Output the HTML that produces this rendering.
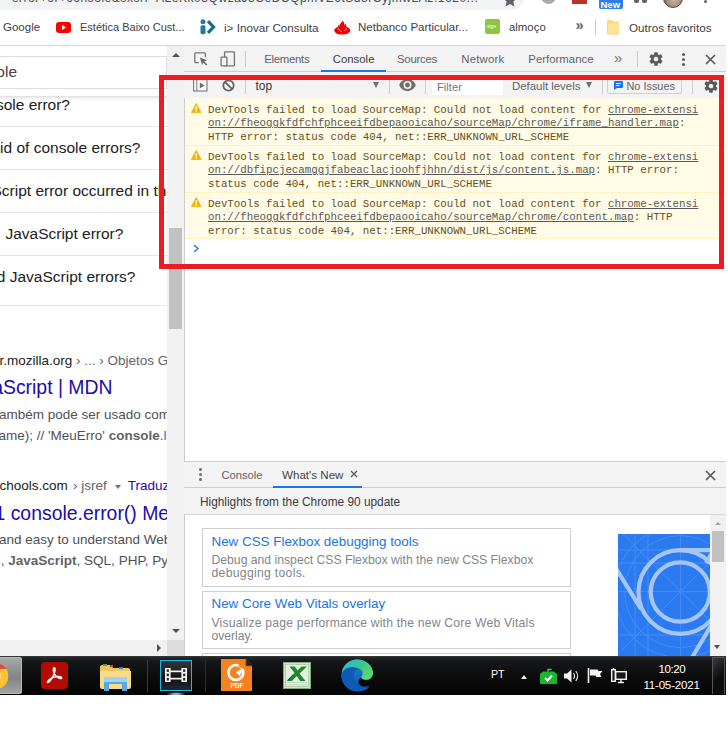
<!DOCTYPE html>
<html>
<head>
<meta charset="utf-8">
<title>DevTools console</title>
<style>
*{box-sizing:border-box;margin:0;padding:0}
html,body{width:728px;height:750px;overflow:hidden;background:#fff}
body{position:relative;font-family:"Liberation Sans",sans-serif;color:#333;-webkit-font-smoothing:antialiased}
#wrap{position:absolute;left:0;top:0;width:726px;height:695px;overflow:hidden;background:#fff}
.abs{position:absolute}
.t{position:absolute;white-space:nowrap;line-height:1}
/* top chrome */
#omni{left:-20px;top:-20px;width:545px;height:30px;background:#f1f3f4;border-radius:14px}
#bm{left:0;top:10px;width:728px;height:35px;background:transparent}
#bmline{left:0;top:45px;width:728px;height:1px;background:#d4d6d9}
.bmt{font-size:12px;color:#3c4043;top:21.600px}
/* page */
#page{left:0;top:46px;width:167px;height:594px;background:#fff;overflow:hidden}
.q{font-size:16.5px;color:#202124}
.sep{position:absolute;left:0;width:167px;height:1px;background:#e4e6e9}
/* devtools */
#dt{left:184px;top:46px;width:544px;height:610px;background:#fff;border-left:1px solid #cdcdcd}
#dtbar{left:184px;top:46px;width:544px;height:26px;background:#f3f3f3;border-bottom:1px solid #cdcdcd}
.tab{font-size:12px;color:#5f6368;top:54px}
#ctbar{left:184px;top:72px;width:544px;height:27px;background:#f3f3f3;border-bottom:1px solid #d6d6d6}
.msg{position:absolute;left:185px;width:541px;height:47px;background:#fffbe6;border-bottom:1px solid #fff1c0}
.ml{position:absolute;left:23px;white-space:pre;font-family:"Liberation Mono",monospace;font-size:10.75px;line-height:1;color:#66501c}
.ml u{color:#595959}
/* drawer */
#drtab{left:184px;top:461px;width:544px;height:27px;background:#f3f3f3;border-top:1px solid #cdcdcd;border-bottom:1px solid #cdcdcd}
#drhead{left:184px;top:488px;width:544px;height:27px;background:#f3f3f3;border-bottom:1px solid #d6d6d6}
.card{position:absolute;left:202px;width:369px;background:#fff;border:1px solid #d0d0d0}
.ct{font-size:13.5px;color:#1a73e8}
.cd{font-size:12.5px;color:#80868b}
/* taskbar */
#tb{left:0;top:656px;width:728px;height:39px;background:linear-gradient(#3a3b3d 0,#222325 5%,#161719 14%,#0c0c0d 50%,#050505 100%)}
</style>
</head>
<body>
<div id="wrap">
<!-- top -->
<div class="abs" id="omni"></div>
<div class="t" style="left:3px;top:-8px;font-size:12px;color:#4a4d51;letter-spacing:.55px">&#8226; error+or+console&amp;sxsrf=ALeKk03QwzaJ5CeDCQpmVZ6tSd8rCyjmwLAz:1620...</div>
<svg class="abs" style="left:502px;top:-8px" width="16" height="16" viewBox="0 0 16 16"><path d="M8 1l2.1 4.6 5 .6-3.7 3.4 1 5L8 12.1 3.6 14.6l1-5L.9 6.200l5-.6z" fill="#5f6368"/></svg>
<div class="abs" style="left:540.500px;top:-11.500px;width:15px;height:15px;border-radius:8px;background:#a6abb0"></div>
<div class="abs" style="left:572px;top:-6px;width:15px;height:9.500px;background:#b83227"></div>
<div class="abs" style="left:598.500px;top:-2px;width:24px;height:11px;background:#2f7df0;border-radius:2px"></div>
<div class="t" style="left:600.500px;top:-.3px;font-size:9.500px;font-weight:700;color:#fff">New</div>
<div class="abs" style="left:634px;top:-3px;width:5px;height:6px;background:#5f6368;border-radius:0 0 2px 2px"></div>
<div class="abs" style="left:642px;top:-3px;width:5px;height:6px;background:#5f6368;border-radius:0 0 2px 2px"></div>
<div class="abs" style="left:663px;top:-12.500px;width:20px;height:20px;border-radius:10px;background:radial-gradient(circle at 55% 60%,#c9b3a6 0,#a98f82 45%,#6d544a 75%);border:1.500px solid #5d4037"></div>
<div class="abs" style="left:703.800px;top:-.5px;width:3px;height:3px;border-radius:2px;background:#5f6368"></div>
<div class="abs" id="bm"></div>
<div class="abs" id="bmline"></div>
<div class="t bmt" style="left:3px;font-size:11.5px">Google</div>
<svg class="abs" style="left:56px;top:22px" width="15" height="11" viewBox="0 0 15 11"><rect width="15" height="11" rx="3" fill="#f00"/><path d="M6 3l4 2.500L6 8z" fill="#fff"/></svg>
<div class="t bmt" style="left:80px;font-size:11px">Estética Baixo Cust...</div>
<svg class="abs" style="left:199.500px;top:19px" width="17" height="16" viewBox="0 0 17 16"><circle cx="3" cy="2.800" r="2.500" fill="#1b7f9b"/><rect x=".5" y="6.200" width="5" height="9" rx="1.600" fill="#1b7f9b"/><path d="M8 2.200L13.500 8 8 13.800" fill="none" stroke="#126e8a" stroke-width="3.200"/></svg>
<div class="t bmt" style="left:224px;font-size:11.7px">i&gt; Inovar Consulta</div>
<svg class="abs" style="left:334px;top:19.500px" width="16.500" height="15" viewBox="0 0 16 15"><path d="M8.600 .3c.2 1.300 1.600 2.400 1.600 4.200 0 .5-.1.900-.2 1.200.6-.5 1-1.200.9-2.100 1 1 1.600 2.200 1.500 3.500 2.100.6 3.600 1.800 3.600 3.300 0 2.300-3.600 4.100-8 4.100s-8-1.800-8-4.100c0-1.500 1.500-2.700 3.700-3.400 0-1 .6-1.900 1.200-2.700-.1 1.100.2 1.900.8 2.500-.2-.5-.3-1-.3-1.500 0-2 2.900-3 3.200-5z" fill="#ec0000"/><path d="M4 8.300c.5 1.500 1.800 2.700 3.300 3.400M12 8.300c-.3 1-.9 1.900-1.700 2.600" fill="none" stroke="#fff" stroke-width=".7"/></svg>
<div class="t bmt" style="left:358px;font-size:11.5px">Netbanco Particular...</div>
<div class="abs" style="left:485px;top:19px;width:15px;height:15px;border-radius:2px;background:#8dc63f"></div>
<div class="t" style="left:487px;top:24px;font-size:5px;color:#fff">sige</div>
<div class="t bmt" style="left:509px;font-size:11.4px">almoço</div>
<div class="t" style="left:575.500px;top:18.300px;font-size:14.500px;color:#5f6368;font-weight:700">»</div>
<div class="abs" style="left:595px;top:19px;width:1px;height:16px;background:#c8cace"></div>
<svg class="abs" style="left:606.500px;top:20px" width="12.500" height="15" viewBox="0 0 12.500 15"><path d="M0 1.500C0 .7.600 0 1.400 0H5l1.500 1.500h4.600c.8 0 1.400.7 1.400 1.500v10c0 .8-.6 1.500-1.400 1.500H1.400C.6 14.500 0 13.800 0 13z" fill="#f9d976"/><path d="M.8 3.500h10.900v9.800H.8z" fill="#fce49a"/></svg>
<div class="t bmt" style="left:629px;font-size:11.7px">Outros favoritos</div>

<!-- page column -->
<div class="abs" id="page">
<div class="abs" style="left:-10px;top:10px;width:177px;height:33px;border:1px solid #dcdee3;background:#fff"></div>
<div class="abs" style="left:0;top:49.500px;width:167px;height:5px;background:linear-gradient(rgba(0,0,0,.13),rgba(0,0,0,.04) 50%,rgba(0,0,0,0))"></div>
<div class="t" style="left:-3.7px;top:18px;font-size:15.5px;color:#444;">ole</div>
<div class="t" style="right:97px;top:51.38px;font-size:15.5px;color:#202124;">sole error?</div>
<div class="t" style="right:26.5px;top:93.58px;font-size:15.5px;color:#202124;">id of console errors?</div>
<div class="t" style="left:-8.5px;top:137.08px;font-size:15.5px;color:#202124;">Script error occurred in the console</div>
<div class="t" style="left:5.4px;top:180.08px;font-size:15.5px;color:#202124;">JavaScript error?</div>
<div class="t" style="right:31.5px;top:222.88px;font-size:15.5px;color:#202124;">d JavaScript errors?</div>
<div class="sep" style="top:80px"></div>
<div class="sep" style="top:123px"></div>
<div class="sep" style="top:166px"></div>
<div class="sep" style="top:209px"></div>
<div class="sep" style="top:259px"></div>
<div class="t" style="left:-0.5px;top:308.07px;font-size:13.5px;color:#202124;">r.mozilla.org<span style="color:#5f6368"> › ... › Objetos Globais</span></div>
<div class="t" style="right:54.5px;top:331.58px;font-size:19.4px;color:#1a0dab;">aScript | MDN</div>
<div class="t" style="left:-1px;top:362.17px;font-size:13.5px;color:#4d5156;">ambém pode ser usado como</div>
<div class="t" style="left:-1.5px;top:382.57px;font-size:13.5px;color:#4d5156;">ame); // 'MeuErro' <b style="color:#5f6368">console</b>.<span style="color:#1a73e8">l</span></div>
<div class="t" style="left:-0.5px;top:432.97px;font-size:13.5px;color:#202124;">chools.com<span style="color:#5f6368;margin-left:1.500px"> › jsref</span></div>
<div class="abs" style="left:115px;top:438.500px;width:0;height:0;border-left:3.700px solid transparent;border-right:3.700px solid transparent;border-top:4.500px solid #70757a"></div>
<div class="t" style="left:127.8px;top:432.97px;font-size:13.5px;color:#1a0dab;">Traduzir</div>
<div class="t" style="left:-5.5px;top:457.68px;font-size:19.4px;color:#1a0dab;">1 console.error() Method</div>
<div class="t" style="left:-1px;top:486.87px;font-size:13.5px;color:#4d5156;">and easy to understand Web</div>
<div class="t" style="left:0.8px;top:508.17px;font-size:13.5px;color:#4d5156;">, <b style="color:#5f6368">JavaScript</b>, SQL, PHP, Python</div>
</div>
<div class="abs" style="left:167px;top:46px;width:17px;height:610px;background:#f1f1f1"></div>
<div class="abs" style="left:171.500px;top:53px;width:0;height:0;border-left:4px solid transparent;border-right:4px solid transparent;border-bottom:4.500px solid #505050"></div>
<div class="abs" style="left:169px;top:228px;width:13px;height:101px;background:#c1c1c1"></div>
<div class="abs" style="left:171.500px;top:629px;width:0;height:0;border-left:4px solid transparent;border-right:4px solid transparent;border-top:4.500px solid #505050"></div>
<div class="abs" style="left:0;top:640px;width:167px;height:16px;background:#f1f1f1"></div>
<div class="abs" style="left:167px;top:640px;width:17px;height:16px;background:#dcdcdc"></div>
<div class="abs" style="left:157px;top:644px;width:0;height:0;border-top:4px solid transparent;border-bottom:4px solid transparent;border-left:4.500px solid #505050"></div>

<!-- devtools -->
<div class="abs" id="dt"></div>
<div class="abs" id="dtbar"></div>
<svg class="abs" style="left:194px;top:52px" width="15" height="14" viewBox="0 0 15 14"><path d="M11.400 5.200V1.800c0-.5-.4-.9-.9-.9H1.700c-.5 0-.9.400-.9.900v8c0 .5.400.9.900.9H4.800" fill="none" stroke="#757575" stroke-width="1.300"/><path d="M6 5.500l7 2.800-2.700 1.200 3 3-1.100 1.100-3-3-1.200 2.700z" fill="#6a6a6a"/></svg>
<svg class="abs" style="left:219.500px;top:51px" width="16" height="16" viewBox="0 0 16 16"><rect x="4.600" y=".8" width="9.800" height="14" rx=".5" fill="none" stroke="#757575" stroke-width="1.300"/><rect x="1.100" y="6.200" width="5.800" height="8.600" rx=".5" fill="#f3f3f3" stroke="#757575" stroke-width="1.300"/></svg>
<div class="abs" style="left:245px;top:51px;width:1px;height:16px;background:#ccc"></div>
<div class="t tab" style="left:264.300px;font-size:11.400px;letter-spacing:-.3px">Elements</div>
<div class="t tab" style="left:332.700px;font-size:11.400px;color:#3c3c3c">Console</div>
<div class="abs" style="left:321px;top:70px;width:65px;height:2px;background:#1a73e8"></div>
<div class="t tab" style="left:397px;font-size:11.400px;letter-spacing:-.27px">Sources</div>
<div class="t tab" style="left:461.300px;font-size:11.400px;letter-spacing:.17px">Network</div>
<div class="t tab" style="left:528.300px;font-size:11.400px">Performance</div>
<div class="t" style="left:614px;top:50px;font-size:15px;color:#6e6e6e">»</div>
<div class="abs" style="left:637px;top:51px;width:1px;height:16px;background:#ccc"></div>
<svg class="abs gear" style="left:647.800px;top:50.800px" width="16" height="16" viewBox="0 0 24 24"><path fill="#5a5a5a" d="M19.430 12.980c.040-.320.070-.640.070-.980s-.030-.660-.070-.980l2.110-1.650c.190-.150.240-.420.120-.640l-2-3.460c-.120-.220-.390-.300-.610-.220l-2.490 1c-.520-.400-1.080-.730-1.690-.980l-.380-2.650C14.460 2.180 14.250 2 14 2h-4c-.250 0-.460.180-.490.420l-.380 2.650c-.610.250-1.170.590-1.690.980l-2.490-1c-.230-.090-.490 0-.610.220l-2 3.460c-.130.220-.070.490.120.640l2.110 1.650c-.040.320-.070.650-.070.980s.030.660.070.980l-2.110 1.650c-.190.150-.240.420-.120.640l2 3.460c.120.220.390.300.610.220l2.490-1c.520.400 1.080.730 1.690.980l.380 2.650c.030.240.240.420.490.420h4c.250 0 .460-.180.490-.420l.380-2.650c.610-.250 1.170-.590 1.690-.980l2.490 1c.230.090.490 0 .610-.220l2-3.460c.120-.220.070-.490-.120-.640l-2.110-1.650zM12 15.500c-1.930 0-3.500-1.570-3.500-3.500s1.570-3.500 3.500-3.500 3.500 1.570 3.500 3.500-1.570 3.500-3.500 3.500z"/></svg>
<div class="abs" style="left:682.300px;top:52.7px;width:3px;height:3px;border-radius:2px;background:#5a5a5a"></div>
<div class="abs" style="left:682.300px;top:57.7px;width:3px;height:3px;border-radius:2px;background:#5a5a5a"></div>
<div class="abs" style="left:682.300px;top:62.7px;width:3px;height:3px;border-radius:2px;background:#5a5a5a"></div>
<svg class="abs" style="left:705px;top:53.500px" width="11" height="11" viewBox="0 0 11 11"><path d="M1 1l9 9M10 1l-9 9" stroke="#5a5a5a" stroke-width="1.700" fill="none"/></svg>

<div class="abs" id="ctbar"></div>
<svg class="abs" style="left:192.500px;top:79px" width="15" height="13" viewBox="0 0 15 13"><rect x=".6" y=".6" width="13.400" height="11.400" fill="#fafafa" stroke="#777" stroke-width="1.100"/><path d="M3.800 1v11" stroke="#777" stroke-width="1"/><path d="M6.800 3.400l4.800 3-4.800 3z" fill="#6e6e6e"/></svg>
<svg class="abs" style="left:222px;top:79px" width="13" height="13" viewBox="0 0 13 13"><circle cx="6.500" cy="6.500" r="5.200" fill="none" stroke="#5f5f5f" stroke-width="1.700"/><path d="M2.800 2.800l7.400 7.400" stroke="#5f5f5f" stroke-width="1.700"/></svg>
<div class="abs" style="left:245px;top:77px;width:1px;height:17px;background:#ccc"></div>
<div class="t" style="left:255.500px;top:81px;font-size:11.900px;color:#333">top</div>
<div class="abs" style="left:373px;top:82px;width:0;height:0;border-left:3.500px solid transparent;border-right:3.500px solid transparent;border-top:6px solid #6e6e6e"></div>
<div class="abs" style="left:389px;top:77px;width:1px;height:17px;background:#ccc"></div>
<svg class="abs" style="left:399px;top:79px" width="17" height="12" viewBox="0 0 17 12"><path d="M8.500 0C4.800 0 1.600 2.400.2 6c1.400 3.600 4.600 6 8.300 6s6.900-2.400 8.300-6C15.400 2.400 12.200 0 8.500 0zm0 10a4 4 0 110-8 4 4 0 010 8zm0-6.400a2.400 2.400 0 100 4.800 2.400 2.400 0 000-4.800z" fill="#6e6e6e"/></svg>
<div class="abs" style="left:425px;top:77px;width:1px;height:17px;background:#ccc"></div>
<div class="abs" style="left:432px;top:77px;width:71px;height:18px;background:#fff"></div>
<div class="t" style="left:437px;top:81.700px;font-size:11.250px;color:#757575">Filter</div>
<div class="t" style="left:512px;top:81px;font-size:11.400px;color:#5f6368">Default levels</div>
<div class="abs" style="left:586px;top:82px;width:0;height:0;border-left:3.500px solid transparent;border-right:3.500px solid transparent;border-top:6px solid #6e6e6e"></div>
<div class="abs" style="left:602px;top:77px;width:1px;height:17px;background:#ccc"></div>
<div class="abs" style="left:607px;top:79px;width:75px;height:15px;border:1px solid #d0d0d0;border-radius:2px;background:#f3f3f3"></div>
<svg class="abs" style="left:614px;top:81px" width="9" height="9" viewBox="0 0 9 9"><path d="M1 0h7a1 1 0 011 1v5a1 1 0 01-1 1H3L0 9V1a1 1 0 011-1z" fill="#1a73e8"/><rect x="2" y="2" width="5" height="1" fill="#fff"/><rect x="2" y="4" width="3.500" height="1" fill="#fff"/></svg>
<div class="t" style="left:626.500px;top:81px;font-size:10.900px;color:#5f6368">No Issues</div>
<div class="abs" style="left:692px;top:77px;width:1px;height:17px;background:#ccc"></div>
<svg class="abs gear" style="left:702.500px;top:77.500px" width="16" height="16" viewBox="0 0 24 24"><path fill="#5a5a5a" d="M19.430 12.980c.040-.320.070-.640.070-.980s-.030-.660-.070-.980l2.110-1.650c.190-.150.240-.420.120-.640l-2-3.460c-.120-.220-.390-.300-.610-.220l-2.490 1c-.520-.400-1.080-.730-1.690-.980l-.380-2.650C14.460 2.180 14.250 2 14 2h-4c-.250 0-.460.180-.490.420l-.380 2.650c-.610.250-1.170.590-1.690.980l-2.490-1c-.230-.090-.490 0-.610.220l-2 3.460c-.130.220-.070.490.120.640l2.110 1.650c-.040.320-.070.650-.070.980s.030.660.070.980l-2.110 1.650c-.190.150-.240.420-.120.640l2 3.460c.120.220.390.300.610.220l2.490-1c.520.400 1.080.730 1.690.980l.380 2.650c.030.240.240.420.490.420h4c.250 0 .460-.180.490-.420l.380-2.650c.610-.250 1.170-.590 1.690-.980l2.490 1c.230.090.490 0 .610-.220l2-3.460c.120-.220.070-.490-.120-.640l-2.110-1.650zM12 15.500c-1.930 0-3.500-1.570-3.500-3.500s1.570-3.500 3.500-3.500 3.500 1.570 3.500 3.500-1.570 3.500-3.500 3.500z"/></svg>

<!-- messages -->
<div class="msg" style="top:98px;height:48px"><svg class="abs" style="left:6.400px;top:4.7px" width="10.500" height="10.500" viewBox="0 0 10 10"><path d="M5 .3L9.800 9.300H.2z" fill="#f0b400" stroke="#f0b400" stroke-width=".6" stroke-linejoin="round"/><rect x="4.350" y="3" width="1.300" height="3.400" fill="#fff"/><rect x="4.350" y="7.100" width="1.300" height="1.300" fill="#fff"/></svg><div class="ml" style="top:6.50px">DevTools failed to load SourceMap: Could not load content for <u>chrome-extensi</u></div><div class="ml" style="top:20.35px"><u>on://fheoggkfdfchfphceeifdbepaooicaho/sourceMap/chrome/iframe_handler.map</u>:</div><div class="ml" style="top:34.20px">HTTP error: status code 404, net::ERR_UNKNOWN_URL_SCHEME</div></div>
<div class="msg" style="top:146px;height:47px"><svg class="abs" style="left:6.400px;top:3.7px" width="10.500" height="10.500" viewBox="0 0 10 10"><path d="M5 .3L9.800 9.300H.2z" fill="#f0b400" stroke="#f0b400" stroke-width=".6" stroke-linejoin="round"/><rect x="4.350" y="3" width="1.300" height="3.400" fill="#fff"/><rect x="4.350" y="7.100" width="1.300" height="1.300" fill="#fff"/></svg><div class="ml" style="top:5.50px">DevTools failed to load SourceMap: Could not load content for <u>chrome-extensi</u></div><div class="ml" style="top:19.35px"><u>on://dbfipcjecamggjfabeaclacjoohfjhhn/dist/js/content.js.map</u>: HTTP error:</div><div class="ml" style="top:33.20px">status code 404, net::ERR_UNKNOWN_URL_SCHEME</div></div>
<div class="msg" style="top:193px;height:46px"><svg class="abs" style="left:6.400px;top:3.7px" width="10.500" height="10.500" viewBox="0 0 10 10"><path d="M5 .3L9.800 9.300H.2z" fill="#f0b400" stroke="#f0b400" stroke-width=".6" stroke-linejoin="round"/><rect x="4.350" y="3" width="1.300" height="3.400" fill="#fff"/><rect x="4.350" y="7.100" width="1.300" height="1.300" fill="#fff"/></svg><div class="ml" style="top:5.50px">DevTools failed to load SourceMap: Could not load content for <u>chrome-extensi</u></div><div class="ml" style="top:19.35px"><u>on://fheoggkfdfchfphceeifdbepaooicaho/sourceMap/chrome/content.map</u>: HTTP</div><div class="ml" style="top:33.20px">error: status code 404, net::ERR_UNKNOWN_URL_SCHEME</div></div>
<svg class="abs" style="left:193px;top:244px" width="7" height="9" viewBox="0 0 7 9"><path d="M1 1l4 3.500L1 8" fill="none" stroke="#3b78e7" stroke-width="1.500"/></svg>

<!-- drawer -->
<div class="abs" id="drtab"></div>
<div class="abs" id="drhead"></div>
<div class="abs" style="left:199px;top:467.7px;width:3px;height:3px;border-radius:2px;background:#6e6e6e"></div>
<div class="abs" style="left:199px;top:472.7px;width:3px;height:3px;border-radius:2px;background:#6e6e6e"></div>
<div class="abs" style="left:199px;top:477.7px;width:3px;height:3px;border-radius:2px;background:#6e6e6e"></div>
<div class="t" style="left:221.500px;top:470.43px;font-size:11.200px;color:#5f6368">Console</div>
<div class="t" style="left:282px;top:469.00px;font-size:11.600px;color:#444">What's New</div>
<svg class="abs" style="left:350px;top:470px" width="8" height="8" viewBox="0 0 8 8"><path d="M1 1l6 6M7 1L1 7" stroke="#5a5a5a" stroke-width="1.300" fill="none"/></svg>
<div class="abs" style="left:273px;top:486px;width:89px;height:2px;background:#1a73e8"></div>
<svg class="abs" style="left:705px;top:470px" width="11" height="11" viewBox="0 0 11 11"><path d="M1 1l9 9M10 1l-9 9" stroke="#5a5a5a" stroke-width="1.700" fill="none"/></svg>
<div class="t" style="left:200px;top:497.36px;font-size:11.850px;color:#3a3a3a">Highlights from the Chrome 90 update</div>
<div class="card" style="top:528px;height:59px"></div>
<div class="card" style="top:591px;height:58px"></div>
<div class="card" style="top:653px;height:20px"></div>
<div class="t ct" style="left:211.500px;top:535.00px;font-size:13.400px">New CSS Flexbox debugging tools</div>
<div class="t cd" style="left:211.500px;top:553.97px;font-size:12.200px">Debug and inspect CSS Flexbox with the new CSS Flexbox</div>
<div class="t cd" style="left:211.500px;top:567.17px;font-size:12.200px;letter-spacing:.3px">debugging tools.</div>
<div class="t ct" style="left:211.500px;top:597.10px;font-size:13.400px">New Core Web Vitals overlay</div>
<div class="t cd" style="left:211.500px;top:616.97px;font-size:12.200px;letter-spacing:.185px">Visualize page performance with the new Core Web Vitals</div>
<div class="t cd" style="left:211.500px;top:629.77px;font-size:12.200px;letter-spacing:-.05px">overlay.</div>
<svg class="abs" style="left:618px;top:534px" width="92" height="122" viewBox="618 534 92 122">
<rect x="618" y="534" width="92" height="122" fill="#2b7af0"/>
<g stroke="#6ea6f7" stroke-width="1" fill="none" opacity=".42">
<path d="M635 534v122M648 534v122M680.600 534v122M618 550h92M618 563h92M618 591.600h92M618 635h92"/>
<path d="M620 531l100 100M741 531L621 651"/>
<circle cx="680.600" cy="591.600" r="56"/><circle cx="680.600" cy="591.600" r="66"/>
</g>
<g stroke="#a4c6fb" stroke-width="4.200" fill="none">
<circle cx="680.300" cy="592" r="29.600"/>
<circle cx="680.300" cy="592" r="41.800"/>
<path d="M680 550.200h32M612 562l29 47M713 622.500l-24 40M712 553l-6 10"/>
</g>
</svg>
<div class="abs" style="left:710px;top:515px;width:16px;height:141px;background:#f1f1f1"></div>
<div class="abs" style="left:715px;top:521.500px;width:0;height:0;border-left:3.300px solid transparent;border-right:3.300px solid transparent;border-bottom:3.800px solid #a3a3a3"></div>
<div class="abs" style="left:712px;top:531px;width:12px;height:31px;background:#c1c1c1"></div>
<div class="abs" style="left:714.200px;top:645.300px;width:0;height:0;border-left:3.700px solid transparent;border-right:3.700px solid transparent;border-top:4.200px solid #505050"></div>

<!-- taskbar -->
<div class="abs" id="tb"></div>
<div class="abs" style="left:-3px;top:657px;width:25px;height:37px;border:1px solid #b9b9b9;border-radius:2px;background:linear-gradient(#a9a9a9,#8a8a8a 45%,#858585 60%,#a3a3a3)"></div>
<svg class="abs" style="left:-17.700px;top:663.200px" width="26.400" height="26.400" viewBox="0 0 30 30"><defs><clipPath id="cc"><circle cx="15" cy="15" r="15"/></clipPath></defs><g clip-path="url(#cc)"><rect width="30" height="30" fill="#fbc230"/><rect width="30" height="6.800" fill="#de4b3c"/><rect x="0" y="12" width="21" height="6" fill="#fff3d0"/></g></svg>
<svg class="abs" style="left:41px;top:662px" width="27" height="27" viewBox="0 0 27 27"><rect width="27" height="27" rx="4" fill="#b30b00"/><path d="M6.500 20c1-2.500 5-5 11-5.500 2-.2 3.500.5 3 1.500-.6 1-3 .3-5-1.500-2.500-2.300-3.600-6-3-8 .4-1.200 1.700-.8 1.700.8 0 3-3 9.500-5.500 12-.9.900-2.600 1.700-2.200.7z" fill="none" stroke="#fff" stroke-width="1.500"/></svg>
<svg class="abs" style="left:99px;top:662px" width="33" height="30" viewBox="0 0 33 30">
<path d="M1 5c0-1 .8-2 2-2h9l2 3h15c1.200 0 2 .8 2 2v16H1z" fill="#e9c860"/>
<rect x="4" y="2" width="4" height="2" fill="#3aa845"/><rect x="11" y="3" width="3" height="2" fill="#d8392b"/><rect x="20" y="5" width="4" height="2" fill="#2f7de1"/>
<path d="M1 9h31v16a2 2 0 01-2 2H3a2 2 0 01-2-2z" fill="#f6dc86"/>
<path d="M5 29V17a2 2 0 012-2h19a2 2 0 012 2v12h-5v-7H10v7z" fill="#57a7e0"/>
<path d="M5 20V17a2 2 0 012-2h19a2 2 0 012 2v3z" fill="#9fd2f5"/>
</svg>
<div class="abs" style="left:147px;top:660px;width:1px;height:32px;background:#3a3a3a"></div>
<div class="abs" style="left:205px;top:660px;width:1px;height:32px;background:#2e2e2e"></div>
<div class="abs" style="left:160px;top:660px;width:32px;height:31px;border:1.500px solid #21b6e8;background:linear-gradient(#33383d,#111 60%,#1c2a33)"></div>
<svg class="abs" style="left:165px;top:667.500px" width="22" height="15" viewBox="0 0 22 15"><rect x="0" y="0" width="5.600" height="14" fill="#f4f4f4"/><rect x="16.400" y="0" width="5.600" height="14" fill="#f4f4f4"/><rect x="5" y="2.500" width="12" height="1.700" fill="#f4f4f4"/><rect x="5" y="9.800" width="12" height="1.700" fill="#f4f4f4"/><g fill="#2a2a2a"><rect x="1.700" y="1.300" width="2.200" height="2.600"/><rect x="1.700" y="5.600" width="2.200" height="2.600"/><rect x="1.700" y="9.900" width="2.200" height="2.600"/><rect x="18.100" y="1.300" width="2.200" height="2.600"/><rect x="18.100" y="5.600" width="2.200" height="2.600"/><rect x="18.100" y="9.900" width="2.200" height="2.600"/></g></svg>
<div class="abs" style="left:166px;top:692px;width:20px;height:4px;border-radius:50%;background:radial-gradient(#cfe9ff,rgba(120,180,255,0) 70%)"></div>
<svg class="abs" style="left:220.600px;top:659.200px" width="31.800" height="32" viewBox="0 0 32 32"><path d="M0 0h25l7 7v25H0z" fill="#f5821f"/><path d="M25 0l7 7h-7z" fill="#1b1b1b"/><path d="M25 0v7h7" fill="none" stroke="#c75f08" stroke-width="1"/>
<circle cx="15" cy="13.500" r="7.500" fill="none" stroke="#fff" stroke-width="2.600"/><path d="M15 13.500c3-3 6-3.500 9-1.500-3 .5-4 2-5 5z" fill="#fff"/><path d="M18 6l5 3" stroke="#f5821f" stroke-width="2.500"/>
<text x="16" y="29" font-family="Liberation Sans" font-size="6.500" font-weight="700" fill="#fff" text-anchor="middle">PDF</text></svg>
<svg class="abs" style="left:283px;top:662px" width="28" height="27" viewBox="0 0 28 27"><rect x=".5" y=".5" width="27" height="26" fill="#d3e4cd" stroke="#86a87b"/><rect x="2.500" y="2.500" width="23" height="22" fill="#e4efe0" stroke="#a9c7a0" stroke-width=".8"/><path d="M4 20.500h20M4 22.800h20" stroke="#b9d2b2" stroke-width=".8"/><path d="M6.500 4.500h5.200l2.800 4 4.200-4H24l-7.500 7 6 7.500h-5.300l-3.500-5-4.700 5H4l7.700-8z" fill="#23862f"/><path d="M11.700 10.500L4 18.500h2.500z" fill="#166b22"/></svg>
<svg class="abs" style="left:341.300px;top:659.200px" width="32.500" height="32.500" viewBox="0 0 33 33"><defs><linearGradient id="eg1" x1="0" y1="0" x2="1" y2=".6"><stop offset="0" stop-color="#2fb6ec"/><stop offset=".55" stop-color="#37c58f"/><stop offset="1" stop-color="#5fd66f"/></linearGradient><linearGradient id="eg2" x1="0" y1="0" x2=".4" y2="1"><stop offset="0" stop-color="#1f9de6"/><stop offset="1" stop-color="#0c4fa3"/></linearGradient></defs>
<circle cx="16.500" cy="16.500" r="16" fill="url(#eg2)"/>
<path d="M.8 13.500C2.200 6 8.500.5 16.500.5c9 0 16 6.500 16 13.500 0 4.300-3 7-6.800 7-3 0-5.200-1.200-5.200-2.500 0-1 1.500-1.800 1.500-4 0-3-3-5.500-7-5.500-5.500 0-10.500 3-14.200 4.500z" fill="url(#eg1)"/>
<path d="M20.300 18.700c.3 1.600 2.600 2.800 5.400 2.800 3 0 5.600-1.800 6.500-4.800l.6 1.300c0 3.500-1.300 6.300-3.200 8.600-2.500 1.500-5.500 1.700-8 1-3.800-1.400-5.600-5-1.300-8.900z" fill="#0a0a0b"/>
<path d="M13 17.500c0 6 4.500 10.500 10 11.500 2 .3 4.500-.3 6.500-1.700-3 3.700-7.500 5.700-13 5.700C8 33 .5 26 .5 17 .5 12 6 8 11 8c3 0 5 1 6.500 2.500-3 .8-4.500 3.500-4.500 7z" fill="#0d5bb5"/>
</svg>
<div class="t" style="left:491px;top:668.53px;font-size:10.600px;color:#fff">PT</div>
<div class="abs" style="left:521px;top:674.500px;width:0;height:0;border-left:3.500px solid transparent;border-right:3.500px solid transparent;border-bottom:4.500px solid #eee"></div>
<svg class="abs" style="left:540px;top:668px" width="17" height="16" viewBox="0 0 17 16"><path d="M8 3.500V1.500h3.500" fill="none" stroke="#2ecc40" stroke-width="1.500"/><path d="M0 6l3-2.500h11L17 6v10H0z" fill="#19b52c"/><path d="M5 10l2.500 2.500 4.500-5" fill="none" stroke="#fff" stroke-width="2"/></svg>
<svg class="abs" style="left:564px;top:669px" width="15" height="14" viewBox="0 0 15 14"><path d="M0 4.500h3L7.500.5v13L3 9.500H0z" fill="#f2f2f2"/><path d="M9.500 4c1.200 1.800 1.200 4.200 0 6M11.800 2c2.200 3 2.200 7 0 10" fill="none" stroke="#ddd" stroke-width="1.200"/></svg>
<svg class="abs" style="left:587px;top:668px" width="16" height="15" viewBox="0 0 16 15"><path d="M1.500 0v15" stroke="#f2f2f2" stroke-width="1.600"/><path d="M3 1.500h7.500l1 1.500H15.500L13 6l1.500 3H9.500l-1-1.500H3z" fill="#f2f2f2"/></svg>
<svg class="abs" style="left:611px;top:668px" width="16" height="16" viewBox="0 0 16 16"><rect x="4.700" y="3.700" width="10.600" height="7.600" fill="#1a1a1a" stroke="#f2f2f2" stroke-width="1.400"/><path d="M7 14.500h6M10 11.500v3" stroke="#f2f2f2" stroke-width="1.400"/><rect x=".7" y="1.700" width="3.600" height="11.600" fill="#1a1a1a" stroke="#f2f2f2" stroke-width="1.400"/><path d="M2.500 0v2" stroke="#f2f2f2" stroke-width="1.400"/></svg>
<div class="t" style="left:658.500px;top:662.88px;font-size:11.600px;color:#fff;letter-spacing:-.45px">10:20</div>
<div class="t" style="left:643.400px;top:679.38px;font-size:11.600px;color:#fff;letter-spacing:-.22px">11-05-2021</div>
<div class="abs" style="left:712px;top:657px;width:13px;height:37px;border:1px solid #555;border-bottom:none;background:linear-gradient(135deg,#3a3a3a,#0c0c0c 55%)"></div>

<!-- red annotation -->
<div class="abs" id="red" style="left:159px;top:75px;width:565px;height:194px;border:5px solid #ed1c24"></div>
</div>
</body>
</html>
